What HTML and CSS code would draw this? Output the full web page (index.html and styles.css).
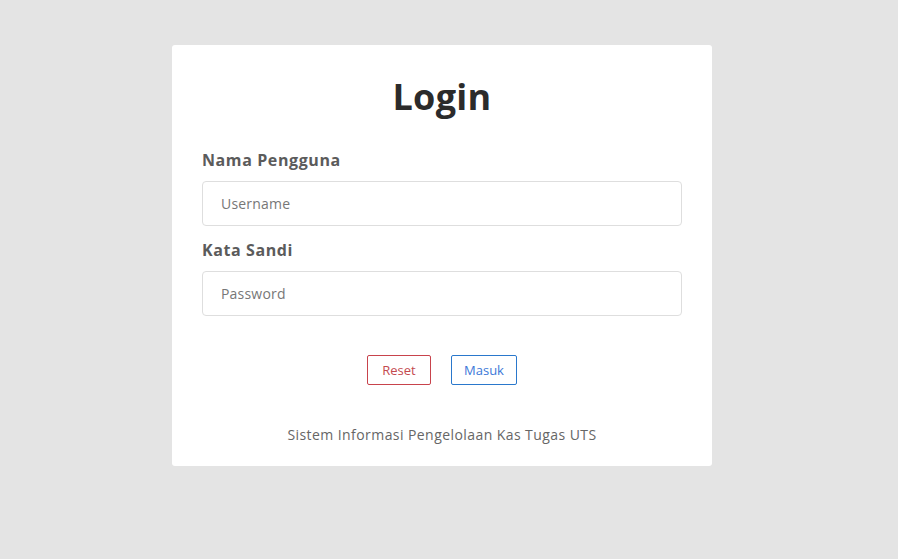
FILE: index.html
```html
<!DOCTYPE html>
<html lang="id">
<head>
<meta charset="utf-8">
<title>Login</title>
<link rel="stylesheet" href="styles.css">
</head>
<body>
<div class="page">
  <div class="card">
    <h1 class="title">Login</h1>
    <form class="form">
      <div class="group">
        <label class="label">Nama Pengguna</label>
        <input class="input" type="text" placeholder="Username">
      </div>
      <div class="group">
        <label class="label">Kata Sandi</label>
        <input class="input" type="password" placeholder="Password">
      </div>
      <div class="actions">
        <button type="button" class="btn btn-reset">Reset</button>
        <button type="button" class="btn btn-login">Masuk</button>
      </div>
    </form>
    <p class="footer">Sistem Informasi Pengelolaan Kas Tugas UTS</p>
  </div>
</div>
</body>
</html>
```
FILE: styles.css
```css
* { box-sizing: border-box; }
html, body { margin: 0; padding: 0; }
body {
  background: #e4e4e4;
  font-family: "Open Sans", "Noto Sans", sans-serif;
  min-height: 559px;
}
.page {
  padding: 45px 0 0 172px;
}
.card {
  width: 540px;
  background: #ffffff;
  border-radius: 3px;
  padding: 30px 30px 21px;
}
.title {
  margin: 0;
  text-align: center;
  font-size: 36px;
  line-height: 44px;
  font-weight: 700;
  color: #2b2b2b;
  letter-spacing: 0.3px;
}
.form { margin-top: 29px; }
.group { margin-bottom: 12px; display: flex; flex-direction: column; }
.label {
  font-size: 16px;
  line-height: 24px;
  font-weight: 700;
  color: #5b5b5b;
  margin-bottom: 9px;
  letter-spacing: 0.6px;
}
.input {
  width: 480px;
  height: 45px;
  border: 1px solid #dedede;
  border-radius: 4px;
  padding: 0 18px;
  font-family: inherit;
  font-size: 14px;
  color: #333;
  outline: none;
  letter-spacing: 0.2px;
}
.input::placeholder { color: #777777; }
.actions {
  display: flex;
  justify-content: center;
  gap: 20px;
  margin-top: 39px;
}
.btn {
  height: 30px;
  background: #fff;
  border-radius: 2px;
  font-family: inherit;
  font-size: 13px;
  padding: 0;
  cursor: pointer;
}
.btn-reset { width: 64px; border: 1px solid #c8434c; color: #c44a4f; }
.btn-login { width: 66px; border: 1px solid #2a78cc; color: #3b78d8; }
.footer {
  margin: 40px 0 0;
  text-align: center;
  font-size: 14px;
  line-height: 20px;
  color: #666666;
  letter-spacing: 0.43px;
}
```
